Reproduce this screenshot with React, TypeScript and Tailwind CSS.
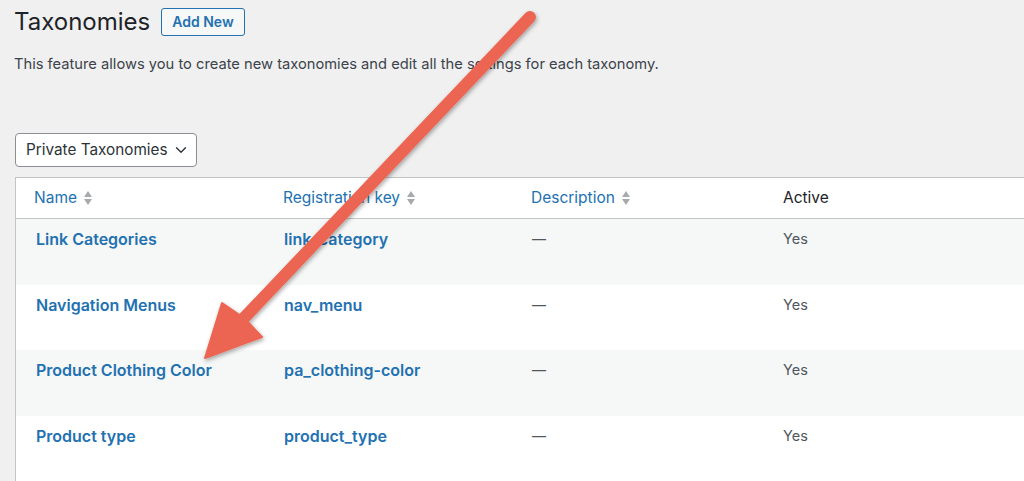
import React from 'react';
import { ChevronDown } from 'lucide-react';

const rows = [
  { name: 'Link Categories', key: 'link_category' },
  { name: 'Navigation Menus', key: 'nav_menu' },
  { name: 'Product Clothing Color', key: 'pa_clothing-color' },
  { name: 'Product type', key: 'product_type' },
];

const SortIcon: React.FC = () => (
  <svg width="10" height="16" viewBox="0 0 10 16" className="ml-[6px]">
    <path d="M5 1 L9 7 H1 Z" fill="#a7aaad" />
    <path d="M1 9 H9 L5 15 Z" fill="#a7aaad" />
  </svg>
);

const Arrow: React.FC = () => (
  <svg className="absolute inset-0 pointer-events-none" width="1024" height="481" viewBox="0 0 1024 481">
    <defs>
      <filter id="shadow" x="-20%" y="-20%" width="140%" height="140%">
        <feDropShadow dx="1" dy="2" stdDeviation="2" floodColor="#000" floodOpacity="0.35" />
      </filter>
    </defs>
    <g filter="url(#shadow)" fill="#ec6553" stroke="#ec6553">
      <line x1="530" y1="17" x2="244" y2="318" strokeWidth="12" strokeLinecap="round" />
      <path d="M205 358 L222 303 L244 318 L262 337 Z" strokeWidth="2" strokeLinejoin="round" />
    </g>
  </svg>
);

const App: React.FC = () => {
  return (
    <div className="relative w-[1024px] h-[481px] overflow-hidden bg-[#f0f0f1] font-['Inter',sans-serif] text-[#1d2327]">
      <div className="pl-[14px] pt-[7px]">
        <div className="flex items-center gap-[11px]">
          <h1 className="text-[24px] leading-[30px] font-normal">Taxonomies</h1>
          <button className="border border-[#2271b1] rounded-[3px] bg-[#f6f7f7] text-[#2271b1] text-[14px] font-semibold px-[10px] h-[28px] leading-[26px]">
            Add New
          </button>
        </div>
        <p className="mt-[17px] text-[14.7px] leading-[20px] text-[#3c434a]">
          This feature allows you to create new taxonomies and edit all the settings for each taxonomy.
        </p>
        <div className="ml-[1px] mt-[59px] inline-flex items-center border border-[#8c8f94] rounded-[4px] bg-white h-[34px] pl-[10px] pr-[6px] gap-[4px] text-[15.3px] text-[#2c3338]">
          Private Taxonomies
          <ChevronDown size={18} strokeWidth={1.8} />
        </div>
      </div>

      <div className="ml-[15px] mt-[10px] w-[1020px] border-l border-t border-[#c3c4c7] bg-white">
        <div className="flex h-[41px] items-center border-b border-[#c3c4c7] text-[15.5px]">
          <div className="w-[250px] pl-[18px] flex items-center text-[#2271b1]">Name<SortIcon /></div>
          <div className="w-[249px] pl-[17px] flex items-center text-[#2271b1]">Registration key<SortIcon /></div>
          <div className="w-[251px] pl-[16px] flex items-center text-[#2271b1]">Description<SortIcon /></div>
          <div className="pl-[17px] text-[#1d2327]">Active</div>
        </div>
        {rows.map((r, i) => (
          <div key={r.key} className={`flex h-[65.5px] pt-[10px] ${i % 2 === 0 ? 'bg-[#f6f7f7]' : 'bg-white'}`}>
            <div className="w-[250px] pl-[20px] text-[16px] font-semibold text-[#2271b1] leading-[20px]">{r.name}</div>
            <div className="w-[249px] pl-[18px] text-[16px] font-semibold text-[#2271b1] leading-[20px]">{r.key}</div>
            <div className="w-[251px] pl-[17px] text-[14px] text-[#50575e] leading-[20px]">—</div>
            <div className="pl-[17px] text-[14.5px] text-[#50575e] leading-[20px]">Yes</div>
          </div>
        ))}
      </div>

      <Arrow />
    </div>
  );
};

export default App;
